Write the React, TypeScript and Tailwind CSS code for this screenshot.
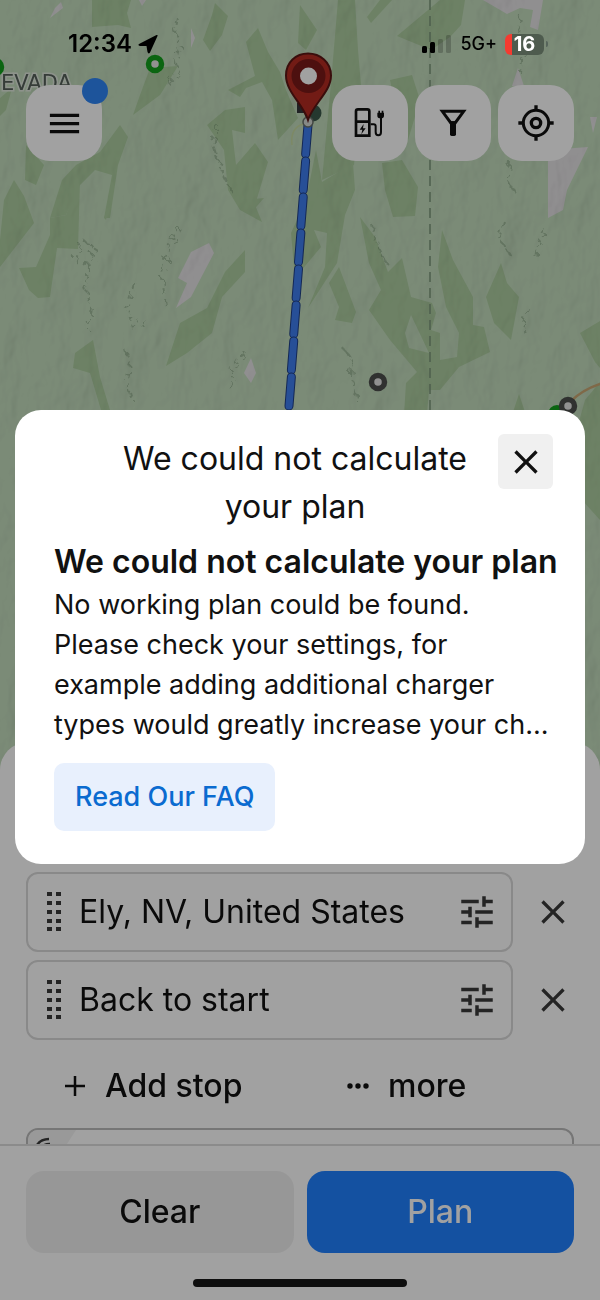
import React from 'react';
import { MdClose, MdMenu, MdTune } from 'react-icons/md';

interface Stop {
  id: string;
  name: string;
}

const stops: Stop[] = [
  { id: 'stop-1', name: 'Ely, NV, United States' },
  { id: 'stop-2', name: 'Back to start' },
];

const forests = [
  '92,0 131,0 127,13 131,28 118,25 92,27',
  '215,3 228,16 222,35 210,51 203,40 212,15',
  '258,28 268,52 280,72 286,90 298,118 278,140 272,100 262,82 246,88 240,97 228,90 255,76 246,42',
  '150,68 178,66 160,95 133,115 140,95',
  '207,125 225,110 245,107 245,133 232,130 236,165 255,143 268,162 255,205 262,222 240,210 228,190 224,150',
  '120,125 128,137 118,165 110,218 104,218 112,175 95,170 80,185 66,215 50,218 62,180 76,165 100,152',
  '26,145 44,165 36,185 25,180',
  '0,98 12,88 6,110 0,116',
  '300,5 317,30 306,50 298,43',
  '338,0 355,0 358,50 361,85 354,165 322,180 331,83',
  '380,0 392,0 371,23 367,17',
  '440,0 465,0 461,25 450,37 431,50 397,36',
  '390,80 412,75 420,100 408,140 396,110',
  '306,200 316,150 322,182 353,163 355,190 345,215 337,263 308,308 325,267 327,233 314,230 321,247 295,278 291,233',
  '382,163 402,160 418,187 415,216 393,217 385,190',
  '4,200 14,180 24,196 34,223 0,267 0,240',
  '50,218 66,215 80,180 78,249 57,248 50,297 38,298 29,290 19,268 36,267 50,235',
  '104,218 111,200 106,220',
  '243,200 264,198 250,214',
  '245,250 245,272 222,297 212,333 187,353 166,366 180,323 207,308 225,272',
  '93,340 100,377 110,410 101,410 90,373 73,368 75,353',
  '339,267 356,312 352,323 335,320 339,307 329,283',
  '360,217 375,237 388,272 402,258 411,297 432,303 436,313 431,330 440,333 440,360 457,357 459,333 446,307 438,267 442,230 453,260 473,297 473,325 484,327 490,352 459,367 440,390 429,390 427,415 404,415 406,383 417,372 390,340 369,310 381,290 369,263',
  '501,263 507,283 519,297 511,340 494,323 486,297',
  '519,394 525,412 513,412',
  '580,333 600,321 600,368 595,362',
  '600,382 585,400 578,425 582,500 600,520',
];

const clearings = [
  '483,0 543,0 538,30 530,27 533,10 520,8 507,14',
  '518,68 524,86 512,86',
  '588,147 567,190 563,210 548,218 548,150',
  '590,117 597,117 593,133',
  '209,243 214,253 191,297 176,308 187,283 178,278 191,252',
  '251,358 256,373 251,383 244,373',
  '61,2 63,8 50,18 55,8',
  '191,28 195,38 191,48',
  '139,0 146,0 142,6',
];

const ridges = [
  'M178,18l-3,14 5,12 -4,16 3,12 -12,14',
  'M75,262l8,-22 12,8 -5,16 -5,22 6,20 -3,24',
  'M145,320l-12,8 -6,-20 8,-28',
  'M166,306l-4,-28 8,-32 10,-18',
  'M345,350l8,12 -2,14 8,28',
  'M503,220l-5,18 8,10 6,10',
  'M510,162l-2,18 6,12',
  'M545,230l-8,14 -2,16',
  'M520,15l-2,18 5,16 -2,24',
  'M125,350l6,18 -4,14 6,20',
  'M528,308l-6,18 4,8',
  'M245,352l-12,18 -4,22',
  'M372,225l6,22 8,16',
  'M217,125l-4,20 8,24 12,24',
];

// top of every leg of the route, one leg is 36px long
const legs = [121, 157, 193, 229, 265, 301, 337, 373];
const routeX = (y: number) => 308 - (y - 121) * 0.066;

const Charger: React.FC<{ x: number; y: number; color: string }> = ({ x, y, color }) => (
  <circle cx={x} cy={y} r="6.5" fill="#e6e6e6" stroke={color} strokeWidth="5.5" />
);

const MapView: React.FC = () => (
  <svg
    className="absolute inset-x-0 top-0 h-[900px] w-full"
    viewBox="0 0 600 900"
    preserveAspectRatio="xMidYMin slice"
    aria-hidden="true"
  >
    <defs>
      <filter id="relief" x="0" y="0" width="100%" height="100%">
        <feTurbulence type="fractalNoise" baseFrequency="0.026 0.015" numOctaves="4" seed="8" result="noise" />
        <feDiffuseLighting in="noise" lightingColor="#ffffff" surfaceScale="7" diffuseConstant="1.1">
          <feDistantLight azimuth="215" elevation="62" />
        </feDiffuseLighting>
      </filter>
      <filter id="rough" x="-10%" y="-10%" width="120%" height="120%">
        <feTurbulence type="fractalNoise" baseFrequency="0.15" numOctaves="2" seed="3" />
        <feDisplacementMap in="SourceGraphic" scale="14" />
      </filter>
    </defs>
    <rect width="600" height="900" fill="#c3dcbd" />
    {forests.map((points) => (
      <polygon key={points} points={points} fill="#adcda0" />
    ))}
    <polygon points="411,315 429,353 409,348 405,333" fill="#c3dcbd" />
    {clearings.map((points) => (
      <polygon key={points} points={points} fill="#e4e2e4" />
    ))}
    <rect width="600" height="900" filter="url(#relief)" className="opacity-25 mix-blend-multiply" />
    <g filter="url(#rough)" fill="none" stroke="#5f7c5c" strokeWidth="2" strokeDasharray="7 4" opacity="0.35">
      {ridges.map((d) => (
        <path key={d} d={d} />
      ))}
    </g>
    <path d="M430 0V415" stroke="#7b957a" strokeWidth="1.5" strokeDasharray="10 6" />
    <path d="M570 402Q582 390 600 384" fill="none" stroke="#c9a673" strokeWidth="2.5" />
    <path d="M303 124Q290 128 292 145" fill="none" stroke="#c6d9a0" strokeWidth="1.5" />
    <text
      x="1"
      y="90"
      fontSize="21"
      fill="#55605a"
      stroke="#dfe8dc"
      strokeWidth="3"
      paintOrder="stroke"
      className="font-['DejaVu_Sans',sans-serif]"
    >
      EVADA
    </text>
    <Charger x={155} y={64} color="#12a01c" />
    <Charger x={-5} y={67} color="#12a01c" />
    <Charger x={378} y={382} color="#4c4f4c" />
    <circle cx="557" cy="414" r="9" fill="#12a01c" />
    <Charger x={568} y={406} color="#4c4f4c" />
    {legs.map((y) => (
      <g key={y} strokeLinecap="round">
        <line x1={routeX(y)} y1={y + 4} x2={routeX(y + 36)} y2={y + 33} stroke="#1f3f86" strokeWidth="9" />
        <line x1={routeX(y)} y1={y + 4} x2={routeX(y + 36)} y2={y + 33} stroke="#3f7df0" strokeWidth="7" />
      </g>
    ))}
    <rect x="297" y="103" width="10" height="10" fill="#33363a" />
    <circle cx="313" cy="113" r="8.5" fill="#3c5a4b" />
    <circle cx="308" cy="122" r="5" fill="#d5d9d5" stroke="#6a716a" strokeWidth="1.5" />
    <path
      d="M308 120C303 104 286 92 286 75.500C286 62 296 53.500 308 53.500S331 62 331 75.500C331 92 313 104 308 120Z"
      fill="#b52c22"
      stroke="#5c1614"
      strokeWidth="2"
    />
    <circle cx="308.500" cy="76" r="17" fill="#7a1a18" />
    <circle cx="308.500" cy="76" r="8.500" fill="#ffffff" />
  </svg>
);

const EvStationIcon: React.FC = () => (
  <svg className="size-9" viewBox="160 316 108 108" fill="none" stroke="#111" strokeWidth="8" aria-hidden="true">
    <path d="M172 408V335q0-6 6-6h28q6 0 6 6v73zM172 366h40" />
    <path d="M216 374h9q6 0 6 6v17q0 10 8 10t8-10V352" strokeWidth="6" />
    <path d="M236 339h20v9q0 8-10 8t-10-8zM239 333h5v8h-5zM249 333h5v8h-5z" fill="#111" stroke="none" />
    <path d="M195 373l-12 17h8l-3 14 13-18h-8z" fill="#111" stroke="none" />
  </svg>
);

const FilterIcon: React.FC = () => (
  <svg className="size-9" viewBox="403 315 108 108" fill="none" stroke="#111" aria-hidden="true">
    <path d="M425 334h64l-25 34h-14z" strokeWidth="9" />
    <path d="M448 364h18v39q0 5-5 5h-8q-5 0-5-5z" fill="#111" stroke="none" />
  </svg>
);

const LocateIcon: React.FC = () => (
  <svg className="size-9" viewBox="652 315 108 108" fill="none" stroke="#111" strokeWidth="9" aria-hidden="true">
    <circle cx="706" cy="369" r="38" />
    <circle cx="706" cy="369" r="14" strokeWidth="10" />
    <path d="M706 316v16M706 406v16M653 369h16M743 369h16" strokeWidth="10" />
  </svg>
);

const StatusBar: React.FC = () => (
  <div className="relative z-20 flex h-[85px] items-start justify-between pt-[30px] pr-[52px] pl-[68px] text-black">
    <div className="flex h-7 items-center gap-[6px]">
      <span className="text-2xl leading-7 font-semibold">12:34</span>
      <svg className="size-5" viewBox="0 0 20 20" aria-hidden="true">
        <path d="M1 10L18.500 1Q20 0.500 19.500 2L12 18.500Q10.500 20.500 9.500 18L8.500 12L2 12Q-0.500 11.500 1 10Z" />
      </svg>
    </div>
    <div className="flex h-7 items-center">
      <svg className="h-5 w-[30px]" viewBox="0 0 30 20" aria-hidden="true">
        <rect x="0" y="12" width="5" height="7" rx="1.500" />
        <rect x="8" y="8" width="5" height="11" rx="1.500" />
        <rect x="16" y="5" width="5" height="14" rx="1.500" fillOpacity="0.2" />
        <rect x="24" y="1" width="5" height="18" rx="1.500" fillOpacity="0.2" />
      </svg>
      <span className="ml-2 text-lg leading-7 font-medium">5G+</span>
      <span className="ml-2 flex h-[21px] w-[39px] items-center justify-center overflow-hidden rounded-md bg-[linear-gradient(90deg,#f53a30_7px,#4e5b4e_7px)] text-xl leading-5 font-bold text-white">
        16
      </span>
      <span className="ml-[2px] h-[6px] w-[2px] rounded-r-sm bg-[#56645a]" />
    </div>
  </div>
);

const MapButton: React.FC<{ label: string; children: React.ReactNode }> = ({ label, children }) => (
  <button type="button" aria-label={label} className="flex size-[76px] items-center justify-center rounded-[24px] bg-white text-[#111]">
    {children}
  </button>
);

const StopRow: React.FC<{ stop: Stop }> = ({ stop }) => (
  <div className="flex items-center">
    <div className="flex h-20 min-w-0 flex-1 items-center rounded-xl border-2 border-[#d9d9d9] pr-[13px] pl-[19px]">
      <svg className="h-10 w-[14px] shrink-0" viewBox="0 0 14 40" fill="#3a3a3a" aria-hidden="true">
        {[0, 9, 18, 27, 35].map((y) => (
          <g key={y}>
            <rect x="0" y={y} width="5" height="4" />
            <rect x="9" y={y} width="5" height="4" />
          </g>
        ))}
      </svg>
      <input
        id={stop.id}
        aria-label="Stop"
        defaultValue={stop.name}
        className="ml-[18px] w-full min-w-0 flex-1 bg-transparent text-[32px] leading-10 text-[#111] outline-none"
      />
      <button type="button" aria-label="Stop settings" className="shrink-0 text-[#3a3a3a]">
        <MdTune size={42} />
      </button>
    </div>
    <button type="button" aria-label="Remove stop" className="ml-5 shrink-0 text-[#3a3a3a]">
      <MdClose size={40} />
    </button>
  </div>
);

const TripSheet: React.FC = () => (
  <section className="relative rounded-t-[28px] bg-white pt-[130px]">
    <div className="flex flex-col gap-2 pr-[27px] pl-[26px]">
      {stops.map((stop) => (
        <StopRow key={stop.id} stop={stop} />
      ))}
    </div>
    <div className="mt-[26px] flex pr-5 pl-[64px] text-[32px] leading-10 font-medium text-[#111]">
      <button type="button" className="flex flex-1 items-center gap-[19px]">
        <svg className="size-[22px]" viewBox="0 0 22 22" stroke="currentColor" strokeWidth="2.500" aria-hidden="true">
          <path d="M11 1v20M1 11h20" />
        </svg>
        Add stop
      </button>
      <button type="button" className="flex w-[234px] items-center gap-[18px]">
        <svg className="h-[22px] w-6" viewBox="0 0 24 22" fill="currentColor" aria-hidden="true">
          <circle cx="4" cy="11" r="2.700" />
          <circle cx="12" cy="11" r="2.700" />
          <circle cx="20" cy="11" r="2.700" />
        </svg>
        more
      </button>
    </div>
    <div className="mt-[22px] h-4 overflow-hidden px-[26px]">
      <div className="h-20 overflow-hidden rounded-xl border-2 border-[#bbb]">
        <svg className="h-10 w-14" viewBox="0 0 56 40" aria-hidden="true">
          <path d="M0 0H48L22 40H0Z" fill="#f2f2f2" />
          <path d="M9 15Q13 9 21 9M14 17Q16 14 22 14" fill="none" stroke="#3a3a3a" strokeWidth="2.500" />
        </svg>
      </div>
    </div>
    <footer className="border-t-2 border-[#dcdcdc] px-[26px] pt-[25px] pb-[13px]">
      <div className="grid grid-cols-2 gap-[13px] text-[32px] leading-10 font-medium">
        <button type="button" className="h-[82px] rounded-[18px] bg-[#f0f0f0] text-[#111]">
          Clear
        </button>
        <button type="button" className="h-[82px] rounded-[18px] bg-[#2080ff] text-white">
          Plan
        </button>
      </div>
      <div className="mx-auto mt-[26px] h-2 w-[214px] rounded-full bg-[#181818]" />
    </footer>
  </section>
);

const ErrorDialog: React.FC = () => (
  <div className="absolute inset-0 z-10 flex items-center bg-black/37 px-[15px] pb-[26px]">
    <div role="dialog" aria-labelledby="dialog-title" className="flex-1 rounded-[26px] bg-white pt-6 pb-[33px] text-[#111]">
      <header className="flex items-start pr-8 pl-[77px]">
        <h1 id="dialog-title" className="flex-1 pt-px text-center text-[32px] leading-[48px]">
          We could not calculate your plan
        </h1>
        <button type="button" aria-label="Close" className="flex size-[55px] items-center justify-center rounded-md bg-[#f0f0f0]">
          <MdClose size={40} />
        </button>
      </header>
      <div className="mt-[11px] pr-[26px] pl-[39px]">
        <h2 className="text-[32px] leading-10 font-semibold whitespace-nowrap">We could not calculate your plan</h2>
        <p className="mt-[3px] text-[27px] leading-10">
          No working plan could be found.
          <br />
          Please check your settings, for
          <br />
          example adding additional charger
          <br />
          types would greatly increase your ch...
        </p>
        <a href="#faq" className="mt-[18px] inline-flex h-[68px] items-center rounded-[10px] bg-[#e8f0fd] px-[21px] text-[27px] leading-10 font-medium text-[#0a6bd0]">
          Read Our FAQ
        </a>
      </div>
    </div>
  </div>
);

export default function App() {
  return (
    <main className="relative flex min-h-screen flex-col overflow-hidden bg-[#c3dcbd] font-['Inter',sans-serif]">
      <MapView />
      <StatusBar />
      <nav className="relative flex flex-1 items-start justify-between px-[26px]">
        <div className="relative">
          <MapButton label="Menu">
            <MdMenu size={39} />
          </MapButton>
          <span className="absolute -top-[7px] -right-[6px] size-[26px] rounded-full bg-[#2f85f5]" />
        </div>
        <div className="flex gap-[7px]">
          <MapButton label="Charger settings">
            <EvStationIcon />
          </MapButton>
          <MapButton label="Filter">
            <FilterIcon />
          </MapButton>
          <MapButton label="My location">
            <LocateIcon />
          </MapButton>
        </div>
      </nav>
      <TripSheet />
      <ErrorDialog />
    </main>
  );
}
